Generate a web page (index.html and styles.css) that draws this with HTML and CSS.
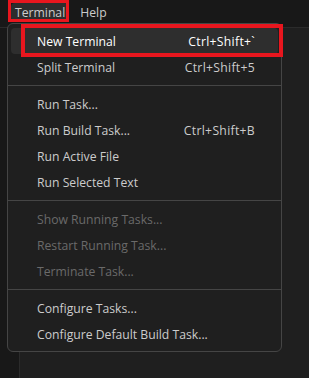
FILE: index.html
```html
<!DOCTYPE html>
<html>
<head>
<meta charset="UTF-8">
<title>Terminal menu</title>
<link rel="stylesheet" href="styles.css">
</head>
<body>
	<div class="menubar">
		<span class="menubar-item open">Terminal</span>
		<span class="menubar-item">Help</span>
	</div>
	<div class="workbench">
		<div class="activitybar"></div>
		<div class="editor"></div>
	</div>

	<div class="menu">
		<div class="menu-row active"><span class="label">New Terminal</span><span class="keys">Ctrl+Shift+`</span></div>
		<div class="menu-row"><span class="label">Split Terminal</span><span class="keys">Ctrl+Shift+5</span></div>
		<div class="separator"></div>
		<div class="menu-row"><span class="label">Run Task...</span></div>
		<div class="menu-row"><span class="label">Run Build Task...</span><span class="keys">Ctrl+Shift+B</span></div>
		<div class="menu-row"><span class="label">Run Active File</span></div>
		<div class="menu-row"><span class="label">Run Selected Text</span></div>
		<div class="separator"></div>
		<div class="menu-row disabled"><span class="label">Show Running Tasks...</span></div>
		<div class="menu-row disabled"><span class="label">Restart Running Task...</span></div>
		<div class="menu-row disabled"><span class="label">Terminate Task...</span></div>
		<div class="separator"></div>
		<div class="menu-row"><span class="label">Configure Tasks...</span></div>
		<div class="menu-row"><span class="label">Configure Default Build Task...</span></div>
	</div>

	<!-- red annotation boxes from the screenshot -->
	<div class="mark mark-menu"></div>
	<div class="mark mark-item"></div>
</body>
</html>
```
FILE: styles.css
```css
html, body {
	margin: 0;
	height: 100%;
	background: #1f1f1f;
	overflow: hidden;
}

body {
	font-family: "Open Sans", "Noto Sans", sans-serif;
	font-size: 12.2px;
	color: #cccccc;
	display: flex;
	flex-direction: column;
}

.menubar {
	border-bottom: 1px solid #2b2b2b;
	background: #181818;
	display: flex;
	align-items: flex-start;
	padding: 3px 0 0 11px;
	box-sizing: border-box;
	height: 28px;
}

.menubar-item {
	padding: 0 4px;
	height: 19px;
	line-height: 20px;
	border-radius: 4px;
}

.menubar-item + .menubar-item {
	margin-left: 7px;
}

.menubar-item.open {
	background: #2d2d2d;
}

.workbench {
	flex: 1;
	display: flex;
}

.activitybar {
	width: 19px;
	background: #181818;
	border-right: 1px solid #2b2b2b;
}

.editor {
	flex: 1;
	background: #1f1f1f;
}

.menu {
	position: absolute;
	left: 7px;
	top: 23px;
	width: 267px;
	padding: 4px 3px;
	background: #1f1f1f;
	border: 1px solid #454545;
	border-radius: 6px;
}

.menu-row {
	height: 26px;
	display: flex;
	align-items: center;
	justify-content: space-between;
	padding: 0 23px 0 26px;
	border-radius: 4px;
	white-space: nowrap;
}

.keys {
	letter-spacing: 0.3px;
}

.menu-row.active {
	background: #2e2e2e;
	color: #ffffff;
}

.menu-row.disabled {
	color: #6a6a6a;
}

.separator {
	height: 1px;
	margin: 5px -3px;
	background: #454545;
}

.mark {
	position: absolute;
	border: 3px solid #e8161e;
}

.mark-menu {
	left: 8px;
	top: 0;
	width: 55px;
	height: 16px;
}

.mark-item {
	left: 21px;
	top: 24px;
	width: 254px;
	height: 25px;
	border-width: 4px;
}
```
